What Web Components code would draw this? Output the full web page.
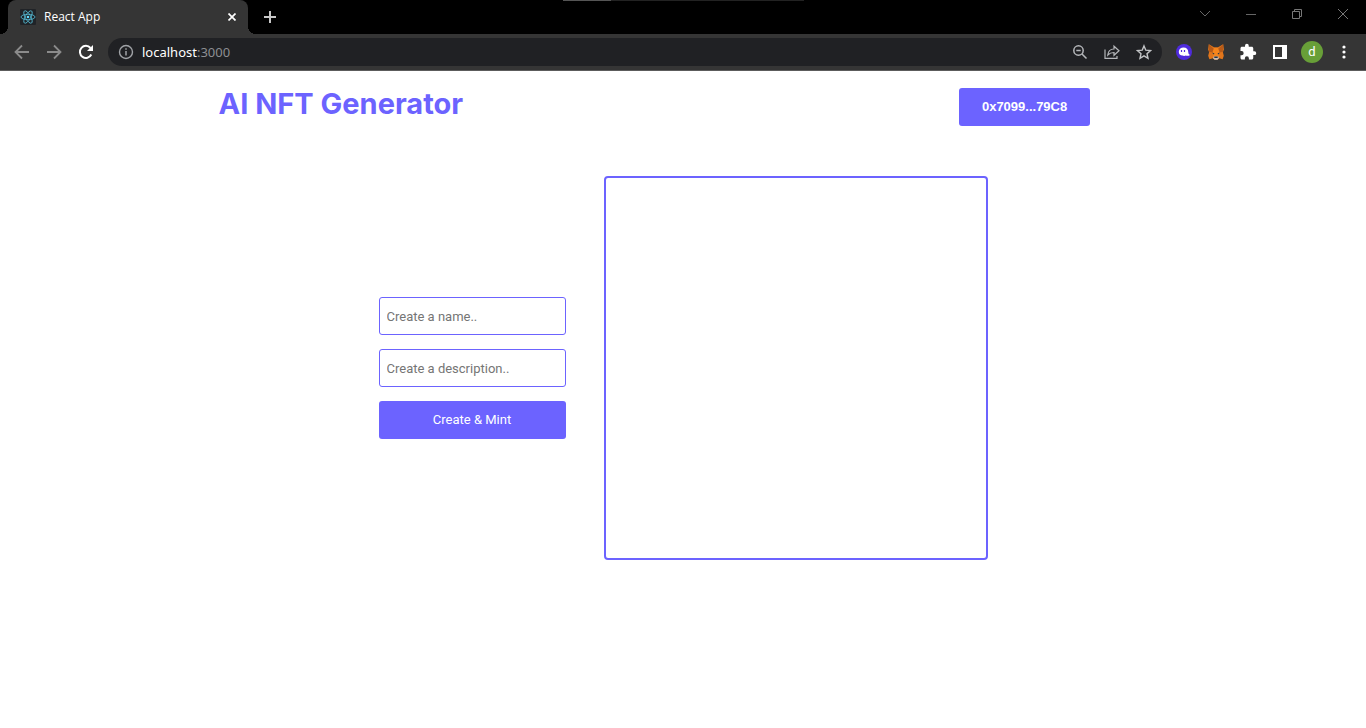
<!DOCTYPE html>
<html lang="en">
<head>
<meta charset="utf-8">
<title>React App</title>
<style>
  body { margin: 0; background: #fff; font-family: "Open Sans", sans-serif; }
</style>
</head>
<body>
<browser-window>
  <browser-tab slot="tabs">React App</browser-tab>
  <browser-toolbar slot="toolbar"></browser-toolbar>
  <nft-nav account="0x7099...79C8">AI NFT Generator</nft-nav>
  <nft-creator></nft-creator>
</browser-window>
<script>
const define = (name, html, setup) => {
  const template = document.createElement('template');
  template.innerHTML = '<style>:host,*{box-sizing:border-box}button{border:0;padding:0;margin:0;background:none;color:inherit;font:inherit;display:grid;place-items:center}svg{display:block}</style>' + html;
  customElements.define(name, class extends HTMLElement {
    constructor() {
      super();
      this.attachShadow({ mode: 'open' }).append(template.content.cloneNode(true));
      if (setup) setup(this);
    }
  });
};

define('browser-window', `
<style>
  :host { display: block; }
  header { position: relative; display: flex; height: 34px; padding-left: 8px; background: #000; }
  .new { width: 44px; height: 34px; }
  .controls { display: flex; margin-left: auto; }
  .controls button { width: 46px; height: 28px; }
  .notch { position: absolute; top: 0; left: 41.2%; width: 241px; height: 1px; background: linear-gradient(90deg, #555 48px, #222 48px); }
</style>
<header>
  <slot name="tabs"></slot>
  <button class="new" aria-label="New tab"><svg width="12" height="12" stroke="#c8c8c8" stroke-width="2"><path d="M6 0v12M0 6h12"/></svg></button>
  <div class="controls">
    <button aria-label="Search tabs"><svg width="12" height="12" fill="none" stroke="#666"><path d="M1 3l5 5 5-5"/></svg></button>
    <button aria-label="Minimize"><svg width="10" height="10" fill="none" stroke="#666"><path d="M0 5.500h10"/></svg></button>
    <button aria-label="Restore"><svg width="10" height="10" fill="none" stroke="#777"><path d="M.5 2.500h7v7h-7zM2.500 2.500v-2h7v7h-2"/></svg></button>
    <button aria-label="Close"><svg width="10" height="10" fill="none" stroke="#777"><path d="M0 0l10 10M10 0L0 10"/></svg></button>
  </div>
  <div class="notch"></div>
</header>
<slot name="toolbar"></slot>
<main><slot></slot></main>`);

define('browser-tab', `
<style>
  :host { position: relative; display: flex; align-items: center; width: 240px; height: 34px; padding: 0 8px 0 12px; border-radius: 8px 8px 0 0; background: #353535; color: #fff; font: 12px/16px "Open Sans", sans-serif; }
  :host::before, :host::after { content: ""; position: absolute; bottom: 0; width: 8px; height: 8px; }
  :host::before { left: -8px; background: radial-gradient(circle at 0 0, #000 8px, #353535 8px); }
  :host::after { right: -8px; background: radial-gradient(circle at 100% 0, #000 8px, #353535 8px); }
  span { margin-left: 8px; }
  button { width: 16px; height: 16px; margin-left: auto; }
</style>
<svg width="16" height="16" viewBox="0 0 16 16"><rect width="16" height="16" rx="1" fill="#202327"/><g fill="none" stroke="#55bdd6" stroke-width=".8"><ellipse cx="8" cy="8" rx="7" ry="2.700"/><ellipse cx="8" cy="8" rx="7" ry="2.700" transform="rotate(60 8 8)"/><ellipse cx="8" cy="8" rx="7" ry="2.700" transform="rotate(120 8 8)"/></g><circle cx="8" cy="8" r="1.300" fill="#61dafb"/></svg>
<span><slot></slot></span>
<button aria-label="Close tab"><svg width="8" height="8" stroke="#fff" stroke-width="1.700"><path d="M.5.5l7 7M7.500.5l-7 7"/></svg></button>`);

define('browser-toolbar', `
<style>
  :host { display: flex; align-items: center; height: 37px; padding: 0 6px; background: #353535; border-bottom: 1px solid #5c5c5c; }
  button { width: 32px; height: 28px; flex: none; }
  .address { display: flex; flex: 1; align-items: center; height: 28px; margin: 0 6px; padding: 0 2px 0 10px; border-radius: 14px; background: #202124; }
  .address a { margin: 0 auto 0 8px; color: #8d8f92; font: 13px/20px "Noto Sans", sans-serif; text-decoration: none; }
  b { color: #fff; font-weight: 400; }
  .avatar i { display: grid; place-items: center; width: 22px; height: 22px; border-radius: 50%; background: #689f38; color: #fff; font: 13px/20px Roboto, sans-serif; }
</style>
<button aria-label="Back"><svg width="16" height="16" fill="none" stroke="#8b8b8b" stroke-width="1.800"><path d="M15 8H2M8 1.500L1.500 8 8 14.500"/></svg></button>
<button aria-label="Forward"><svg width="16" height="16" fill="none" stroke="#8b8b8b" stroke-width="1.800"><path d="M1 8h13M8 1.500L14.500 8 8 14.500"/></svg></button>
<button aria-label="Reload"><svg width="16" height="16" fill="none"><path d="M13.300 10.500A6 6 0 1 1 12.500 4" stroke="#fff" stroke-width="2"/><path d="M15 1v6H9z" fill="#fff"/></svg></button>
<div class="address">
  <svg width="16" height="16" fill="none" stroke="#a0a3a7"><circle cx="8" cy="8" r="6.500" stroke-width="1.400"/><path d="M8 7v4.500M8 4.200v1.500" stroke-width="1.500"/></svg>
  <a href="#"><b>localhost</b>:3000</a>
  <button aria-label="Zoom"><svg width="16" height="16" fill="none" stroke="#b5b7ba" stroke-width="1.500"><circle cx="6.500" cy="6.500" r="4.700"/><path d="M10 10l4.500 4.500M4.300 6.500h4.400"/></svg></button>
  <button aria-label="Share"><svg width="16" height="16" fill="none" stroke="#b5b7ba" stroke-width="1.200"><path d="M1 5.500V14.400h12v-2.500"/><path d="M3.800 11c.4-4 3-6 6.200-6V2.200L15 6.800l-5 4.500V8.500C7.300 8.500 5.400 9.300 3.800 11z"/></svg></button>
  <button aria-label="Bookmark"><svg width="16" height="16" fill="none" stroke="#c2c4c6" stroke-width="1.400"><path d="M8 1.900l1.800 4.300 4.700.4-3.500 3.100 1 4.600L8 11.800l-4 2.500 1-4.600-3.500-3.100 4.700-.4z"/></svg></button>
</div>
<button aria-label="Phantom"><svg width="16" height="16"><circle cx="8" cy="8" r="8" fill="#4f2bdc"/><path d="M2.800 7.500C3.100 4.800 5 3.500 7.500 3.500c3 0 4.700 2 4.800 4.700 0 1.500.8 2.200 1.700 2.700-1.200 1-3 1.100-4.200.7-1 .4-2.300.4-3.200 0-2.200.1-4-1.600-3.800-4.100z" fill="#fff"/><path d="M5.500 6v2M8.500 6v2" stroke="#4f2bdc" stroke-width="1.200"/></svg></button>
<button aria-label="MetaMask"><svg width="16" height="16"><path d="M.8.3L6 3.300h4L15.200.3l.7 5.200-1 2.700.9 3.500-1.200 3.600-3.400-1-1.700 1.500h-3l-1.700-1.500-3.400 1L.2 11.700l.9-3.500-1-2.700z" fill="#e2761b"/><path d="M.8.3L6 5 4.500 8.300 1.100 8M15.200.3L10 5l1.500 3.300 3.400-.3" fill="#b85b18"/><path d="M6 4h4l1.700 5-1.700 4H6L4.300 9z" fill="#f6851b"/><path d="M5.500 12.500h5l.3 2-1.500 1.300H6.700l-1.500-1.300z" fill="#c9bcb1"/><path d="M3.800 8.500l2.500.8-.3 1.500zM12.200 8.500l-2.500.8.3 1.500zM6.300 12.500h3.400v1.500H6.300z" fill="#233447"/></svg></button>
<button aria-label="Extensions"><svg width="18" height="18" viewBox="0 0 24 24"><path fill="#fff" d="M20.500 11H19V7c0-1.100-.9-2-2-2h-4V3.500a2.500 2.500 0 0 0-5 0V5H4c-1.100 0-2 .9-2 2v3.800h1.500a2.700 2.700 0 0 1 0 5.400H2V20c0 1.100.9 2 2 2h3.800v-1.500a2.700 2.700 0 0 1 5.400 0V22H17c1.100 0 2-.9 2-2v-4h1.500a2.500 2.500 0 0 0 0-5z"/></svg></button>
<button aria-label="Side panel"><svg width="14" height="14"><path fill="#fff" fill-rule="evenodd" d="M0 0h14v14H0zM2 2v10h7V2z"/></svg></button>
<button class="avatar" aria-label="Profile"><i>d</i></button>
<button aria-label="Menu"><svg width="4" height="14" fill="#fff"><circle cx="2" cy="2" r="1.600"/><circle cx="2" cy="7" r="1.600"/><circle cx="2" cy="12" r="1.600"/></svg></button>`);

define('nft-nav', `
<style>
  nav { display: flex; align-items: center; justify-content: space-between; height: 72px; padding: 0 20.2% 0 16%; }
  h1 { margin: 0; padding-bottom: 6px; color: #6c63ff; font: 700 29px/36px Inter, sans-serif; white-space: nowrap; }
  button { width: 131px; height: 38px; border-radius: 3px; background: #6c63ff; color: #fff; font: 700 13px/16px "Liberation Sans", sans-serif; }
</style>
<nav><h1><slot></slot></h1><button id="account"></button></nav>`,
  host => { host.shadowRoot.getElementById('account').textContent = host.getAttribute('account'); });

define('nft-creator', `
<style>
  section { display: flex; align-items: center; justify-content: center; gap: 38px; margin-top: 33px; }
  form { display: flex; flex-direction: column; gap: 14px; width: 187px; }
  input, button { width: 100%; height: 38px; border-radius: 3px; font: 13px/16px Roboto, sans-serif; }
  input { margin: 0; padding: 0 7px; border: 1px solid #6c63ff; background: #fff; outline: 0; }
  input::placeholder { color: #757575; }
  button { background: #6c63ff; color: #fff; }
  .image { width: 384px; aspect-ratio: 1; border: 2px solid #6c63ff; border-radius: 4px; }
</style>
<section>
  <form onsubmit="return false">
    <input type="text" aria-label="Name" placeholder="Create a name..">
    <input type="text" aria-label="Description" placeholder="Create a description..">
    <button type="submit">Create &amp; Mint</button>
  </form>
  <div class="image"></div>
</section>`);
</script>
</body>
</html>
